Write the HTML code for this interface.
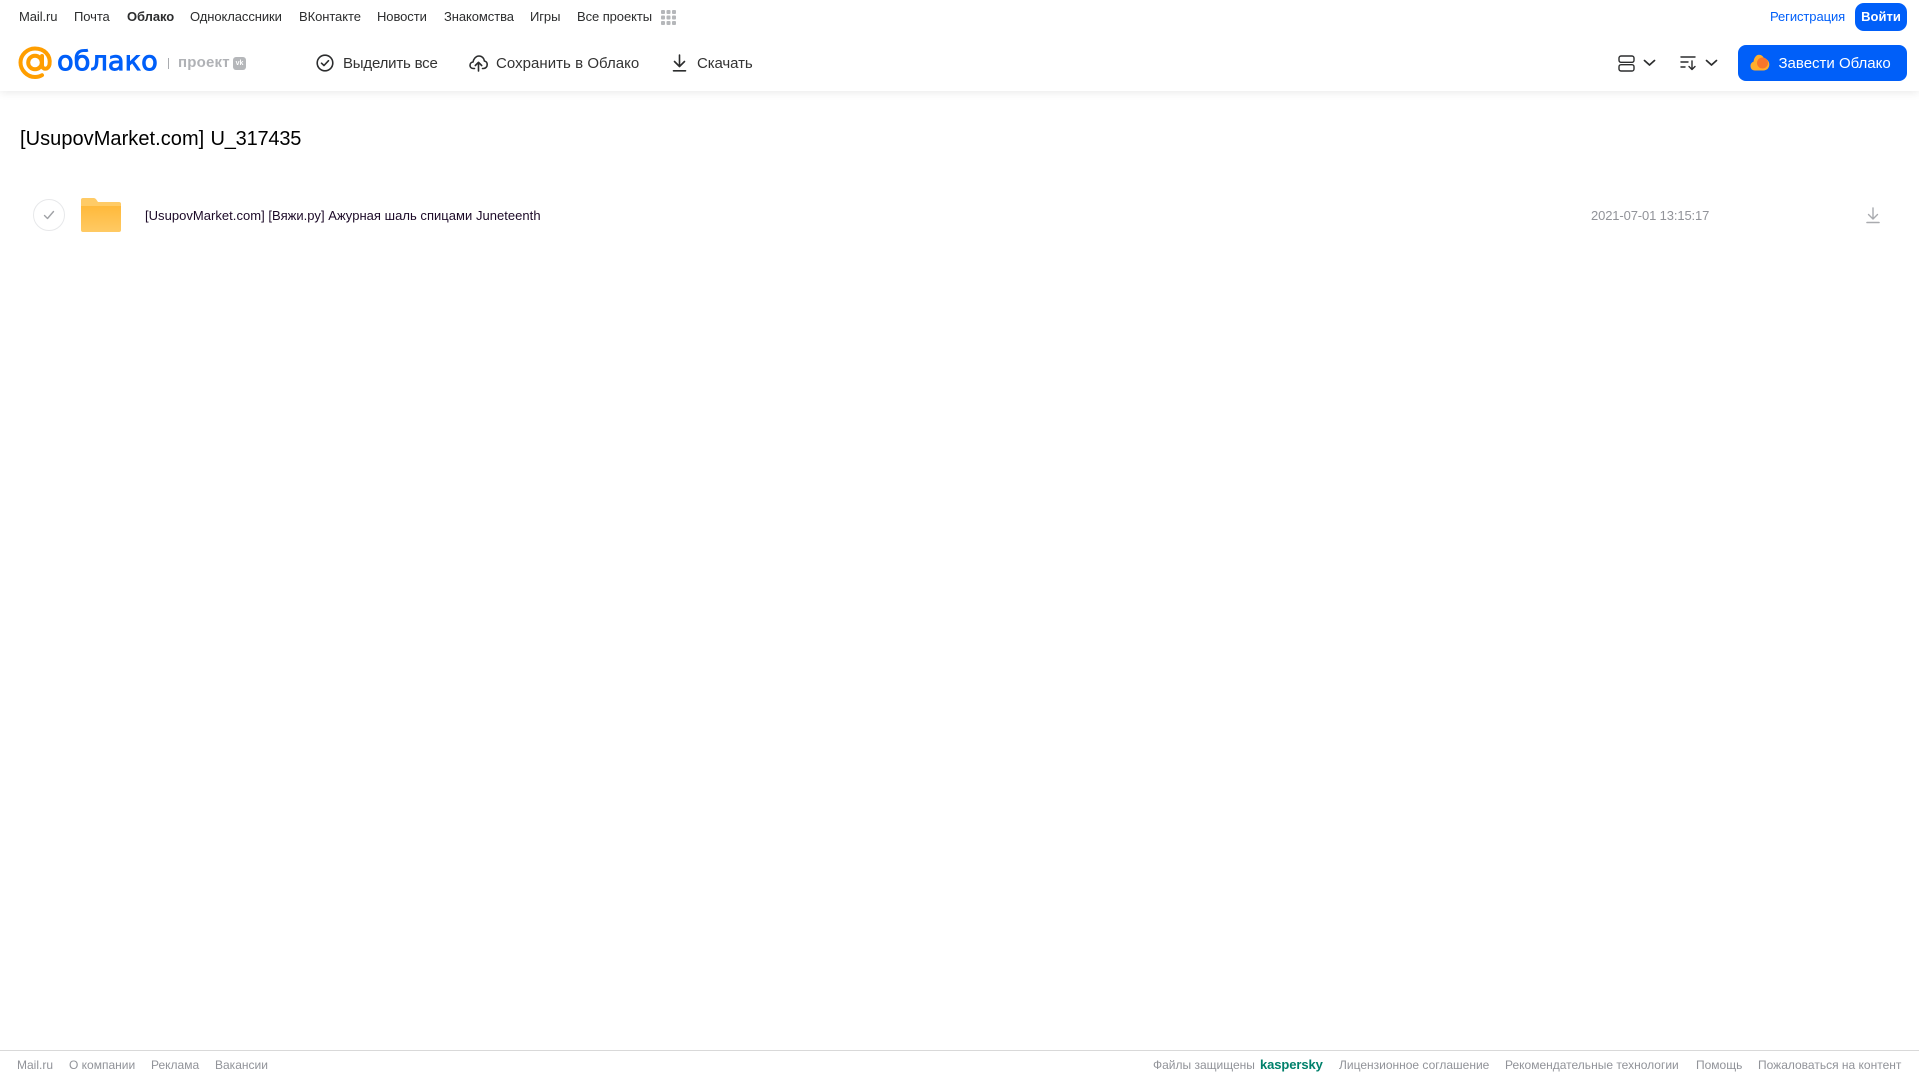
<!DOCTYPE html>
<html lang="ru">
<head>
<meta charset="utf-8">
<title>Облако</title>
<style>
html,body{margin:0;padding:0;background:#fff;}
#p{position:relative;width:1919px;height:1079px;overflow:hidden;background:#fff;font-family:"Liberation Sans",sans-serif;}
.t{position:absolute;white-space:nowrap;line-height:20px;height:20px;}
.n{top:7px;font-size:13px;color:#2c2d2e;letter-spacing:-.08px;}
.b{top:54px;font-size:15px;color:#333;}
.f{top:1055px;font-size:12px;color:#919399;}
svg{position:absolute;display:block;}
</style>
</head>
<body>
<div id="p">
<div style="position:absolute;left:0;top:0;width:1919px;height:91px;background:#fff;box-shadow:0 2px 8px rgba(0,0,0,.08);"></div>

<span class="t n" style="left:19px">Mail.ru</span>
<span class="t n" style="left:74px">Почта</span>
<span class="t n" style="left:127px;font-weight:bold">Облако</span>
<span class="t n" style="left:190px">Одноклассники</span>
<span class="t n" style="left:299px">ВКонтакте</span>
<span class="t n" style="left:377px">Новости</span>
<span class="t n" style="left:444px">Знакомства</span>
<span class="t n" style="left:530px">Игры</span>
<span class="t n" style="left:577px">Все проекты</span>
<svg style="left:661px;top:10px" width="15" height="15" viewBox="0 0 15 15" fill="#b5b7ba"><rect x="0" y="0" width="4" height="4" rx="1"/><rect x="5.500" y="0" width="4" height="4" rx="1"/><rect x="11" y="0" width="4" height="4" rx="1"/><rect x="0" y="5.500" width="4" height="4" rx="1"/><rect x="5.500" y="5.500" width="4" height="4" rx="1"/><rect x="11" y="5.500" width="4" height="4" rx="1"/><rect x="0" y="11" width="4" height="4" rx="1"/><rect x="5.500" y="11" width="4" height="4" rx="1"/><rect x="11" y="11" width="4" height="4" rx="1"/></svg>

<span class="t n" style="left:1770px;color:#005ff9">Регистрация</span>
<div style="position:absolute;left:1855px;top:3px;width:52px;height:28px;border-radius:9px;background:#005ff9;color:#fff;font-size:13px;line-height:28px;text-align:center;font-weight:bold;">Войти</div>

<!-- logo -->
<svg style="left:18px;top:46px" width="35" height="34" viewBox="0 0 35 34" fill="none" stroke="#ff9e00" stroke-width="4"><circle cx="17" cy="16.500" r="6.800"/><path d="M24 10v9c0 5 6.500 5 7.500-.5C33 9 26 2.500 17 2.500 9 2.500 2.500 9 2.500 16.500S9 31 17 31c3 0 5-.6 7-1.800" stroke-linecap="round"/></svg>
<span class="t" style="left:57px;top:47px;height:30px;line-height:30px;font-size:27px;color:#005ff9;font-family:'DejaVu Sans',sans-serif;-webkit-text-stroke:.9px #005ff9;transform-origin:0 50%;transform:scaleX(1.01);">облако</span>
<div style="position:absolute;left:168px;top:58px;width:1px;height:11px;background:#a9abaf"></div>
<span class="t" style="left:178px;top:53px;font-size:15px;font-weight:bold;color:#b0b2b6;letter-spacing:.2px">проект</span>
<div style="position:absolute;left:233px;top:57px;width:13px;height:13px;border-radius:3px;background:#b5b7ba;color:#fff;font-size:7px;line-height:13px;text-align:center;font-weight:bold">vk</div>

<!-- toolbar -->
<svg style="left:316px;top:54px" width="18" height="18" viewBox="0 0 18 18" fill="none" stroke="#2c2d2e" stroke-width="1.600"><circle cx="9" cy="9" r="7.800"/><path d="M5.500 9.200 8 11.500l4.500-4.800" stroke-linecap="round" stroke-linejoin="round"/></svg>
<span class="t b" style="left:343px;letter-spacing:-.2px">Выделить все</span>
<svg style="left:469px;top:54px" width="19" height="18" viewBox="0 0 19 18" fill="none" stroke="#2c2d2e" stroke-width="1.600" stroke-linecap="round" stroke-linejoin="round"><path d="M5.500 14.500H4.500C2.300 14.500 1 13 1 11.200c0-1.800 1.300-3 3-3.200C4.500 5 6.800 2 10 2c3 0 5 2.300 5.400 5 1.600.3 2.800 1.700 2.800 3.500 0 2.200-1.500 4-3.700 4h-1"/><path d="M9.500 17V8.500M6.300 11.500l3.200-3.200 3.200 3.200"/></svg>
<span class="t b" style="left:496px;letter-spacing:.04px">Сохранить в Облако</span>
<svg style="left:672px;top:54px" width="15" height="18" viewBox="0 0 15 18" fill="none" stroke="#2c2d2e" stroke-width="1.600" stroke-linecap="round" stroke-linejoin="round"><path d="M7.500 1v11M2.500 7.500l5 5 5-5"/><path d="M1.500 16.800h12"/></svg>
<span class="t b" style="left:697px;letter-spacing:-.1px">Скачать</span>

<svg style="left:1618px;top:55px" width="17" height="17" viewBox="0 0 17 17" fill="none" stroke="#2c2d2e" stroke-width="1.400"><rect x="1" y="1" width="15" height="6.300" rx="2"/><rect x="1" y="9.700" width="15" height="6.300" rx="2"/></svg>
<svg style="left:1643px;top:59px" width="13" height="8" viewBox="0 0 13 8" fill="none" stroke="#2c2d2e" stroke-width="1.700" stroke-linecap="round" stroke-linejoin="round"><path d="M1.500 1.500l5 4.500 5-4.500"/></svg>
<svg style="left:1680px;top:55px" width="17" height="16" viewBox="0 0 17 16" fill="none" stroke="#2c2d2e" stroke-width="1.400" stroke-linecap="round" stroke-linejoin="round"><path d="M1 2h14M1 7h7M1 12h4"/><path d="M12 6v8.500M9 11.500l3 3 3-3"/></svg>
<svg style="left:1705px;top:59px" width="13" height="8" viewBox="0 0 13 8" fill="none" stroke="#2c2d2e" stroke-width="1.700" stroke-linecap="round" stroke-linejoin="round"><path d="M1.500 1.500l5 4.500 5-4.500"/></svg>

<div style="position:absolute;left:1738px;top:45px;width:169px;height:36px;border-radius:8px;background:#005ff9;"></div>
<svg style="left:1750px;top:54px" width="20" height="17" viewBox="0 0 20 17"><path d="M5 16.500C2 16.500.5 14.500.5 12c0-2.200 1.300-3.700 3-4.200C4 4 6 .8 9 .8c2.500 0 4.300 1.600 5 3.700 3 .3 5.300 2.700 5.300 6 0 3.500-2.500 6-6 6z" fill="#ffae2b"/><circle cx="12.500" cy="9" r="5.500" fill="#f7762b"/></svg>
<span class="t" style="left:1778.500px;top:54px;font-size:15px;color:#fff;">Завести Облако</span>

<!-- title -->
<span class="t" style="left:20px;top:126px;height:26px;line-height:26px;font-size:20px;color:#000;letter-spacing:.05px">[UsupovMarket.com]</span>
<span class="t" style="left:210.500px;top:126px;height:26px;line-height:26px;font-size:20px;color:#000;letter-spacing:-.2px">U_317435</span>

<!-- row -->
<div style="position:absolute;left:33px;top:199px;width:32px;height:32px;box-sizing:border-box;border:1px solid #e7e8ea;border-radius:50%;"></div>
<svg style="left:43px;top:210px" width="12" height="10" viewBox="0 0 12 10" fill="none" stroke="#a0a2a6" stroke-width="1.400" stroke-linecap="round" stroke-linejoin="round"><path d="M1.500 5.500 4.500 8.500 10.500 1.500"/></svg>
<svg style="left:81px;top:198px" width="40" height="34" viewBox="0 0 40 34"><defs><linearGradient id="g" x1="0" y1="0" x2="0" y2="1"><stop offset="0" stop-color="#ffb93b"/><stop offset="1" stop-color="#ffca64"/></linearGradient></defs><path d="M2 0h10c2 0 2.800.7 3.800 2.200L17 4h21c1.300 0 2 .7 2 2v4H0V2c0-1.300.7-2 2-2z" fill="#ffcb66"/><path d="M0 8h40v24c0 1.300-.7 2-2 2H2c-1.300 0-2-.7-2-2z" fill="url(#g)"/></svg>
<span class="t" style="left:145px;top:206px;font-size:13px;color:#1c0a28;letter-spacing:.03px">[UsupovMarket.com] [Вяжи.ру] Ажурная шаль спицами Juneteenth</span>
<span class="t" style="left:1591px;top:206px;font-size:13px;color:#919399;letter-spacing:-.13px">2021-07-01 13:15:17</span>
<svg style="left:1866px;top:207px" width="14" height="17" viewBox="0 0 14 17" fill="none" stroke="#a9abaf" stroke-width="1.400" stroke-linecap="round" stroke-linejoin="round"><path d="M7 1v11M2.500 7.500 7 12l4.500-4.500"/><path d="M1 15.500h12" stroke-width="1.600"/></svg>

<!-- footer -->
<div style="position:absolute;left:0;top:1050px;width:1919px;height:1px;background:#d9d9d9;"></div>
<span class="t f" style="left:17px">Mail.ru</span>
<span class="t f" style="left:69px">О компании</span>
<span class="t f" style="left:151px">Реклама</span>
<span class="t f" style="left:215px">Вакансии</span>
<span class="t f" style="left:1153px">Файлы защищены</span>
<span class="t f" style="left:1260px;font-size:13px;font-weight:bold;color:#00806b;letter-spacing:-.1px">kaspersky</span>
<span class="t f" style="left:1339px">Лицензионное соглашение</span>
<span class="t f" style="left:1505px">Рекомендательные технологии</span>
<span class="t f" style="left:1696px">Помощь</span>
<span class="t f" style="left:1758px">Пожаловаться на контент</span>
</div>
</body>
</html>
